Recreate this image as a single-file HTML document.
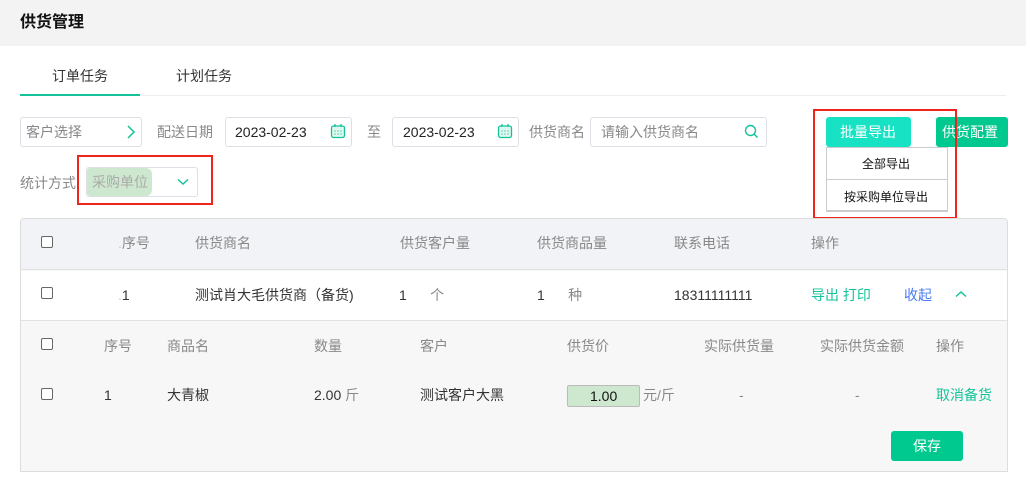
<!DOCTYPE html>
<html><head><meta charset="utf-8"><style>
*{margin:0;padding:0;box-sizing:border-box}
body{width:1026px;height:484px;position:relative;background:#fff;font-family:"Liberation Sans","Noto Sans CJK SC",sans-serif;font-size:14px;color:#333;overflow:hidden}
.a{position:absolute;white-space:nowrap}
.t{position:absolute;white-space:nowrap;line-height:16px}
.box{position:absolute;border:1px solid #dcdfe6;border-radius:3px;background:#fff}
.cb{position:absolute;width:12px;height:12px;border:1px solid #666;border-radius:2px;background:#fff}
.g{color:#888}
</style></head><body>
<div class="a" style="left:0;top:0;width:1026px;height:46px;background:#f3f3f3"></div>
<div class="t" style="left:20px;top:14px;font-size:16px;font-weight:bold;line-height:18px;color:#111">供货管理</div>
<div class="t" style="left:52px;top:68px;font-size:14px;color:#333">订单任务</div>
<div class="t" style="left:176px;top:68px;font-size:14px;color:#333">计划任务</div>
<div class="a" style="left:20px;top:95px;width:986px;height:1px;background:#eee"></div>
<div class="a" style="left:20px;top:94px;width:120px;height:2px;background:#14c39a"></div>

<div class="box" style="left:20px;top:117px;width:122px;height:30px"></div>
<div class="t g" style="left:26px;top:124px">客户选择</div>
<svg class="a" style="left:126px;top:125px" width="10" height="14"><path d="M2 1l6 6-6 6" stroke="#14c39a" stroke-width="1.5" fill="none"/></svg>
<div class="t g" style="left:157px;top:124px">配送日期</div>
<div class="box" style="left:225px;top:117px;width:127px;height:30px"></div>
<div class="t" style="left:235px;top:124px;color:#222">2023-02-23</div>
<div class="t g" style="left:367px;top:124px">至</div>
<div class="box" style="left:392px;top:117px;width:127px;height:30px"></div>
<div class="t" style="left:403px;top:124px;color:#222">2023-02-23</div>
<svg class="a" style="left:330px;top:123px" width="16" height="16"><rect x="1.5" y="3" width="13" height="11.5" rx="2" stroke="#14c39a" fill="#dff7ef" stroke-width="1.3"/><path d="M5 1v3M11 1v3M4.5 8h1M7.5 8h1M10.5 8h1M4.5 11h1M7.5 11h1M10.5 11h1" stroke="#14c39a" stroke-width="1.3"/></svg>
<svg class="a" style="left:497px;top:123px" width="16" height="16"><rect x="1.5" y="3" width="13" height="11.5" rx="2" stroke="#14c39a" fill="#dff7ef" stroke-width="1.3"/><path d="M5 1v3M11 1v3M4.5 8h1M7.5 8h1M10.5 8h1M4.5 11h1M7.5 11h1M10.5 11h1" stroke="#14c39a" stroke-width="1.3"/></svg>
<div class="t g" style="left:529px;top:124px">供货商名</div>
<div class="box" style="left:590px;top:117px;width:177px;height:30px"></div>
<div class="t g" style="left:601px;top:124px">请输入供货商名</div>
<svg class="a" style="left:744px;top:124px" width="15" height="15"><circle cx="6.5" cy="6.5" r="5" stroke="#14c39a" stroke-width="1.4" fill="none"/><path d="M10 10l3.5 3.5" stroke="#14c39a" stroke-width="1.5"/></svg>

<div class="a" style="left:826px;top:117px;width:85px;height:30px;background:#17e3c4;border-radius:3px"></div>
<div class="t" style="left:840px;top:124px;color:#fff;font-size:14px">批量导出</div>
<div class="a" style="left:936px;top:117px;width:72px;height:30px;background:#00c98f;border-radius:3px"></div>
<div class="t" style="left:942px;top:124px;color:#fff;font-size:14px">供货配置</div>
<div class="a" style="left:826px;top:147px;width:122px;height:65px;border:1px solid #ccc;border-bottom:2px solid #ccc;background:#fff"></div>
<div class="a" style="left:826px;top:179px;width:122px;height:1px;background:#ccc"></div>
<div class="t" style="left:862px;top:156px;font-size:12px;color:#111">全部导出</div>
<div class="t" style="left:844px;top:189px;font-size:12px;color:#111">按采购单位导出</div>
<div class="a" style="left:813px;top:109px;width:144px;height:110px;border:2px solid #f0241c"></div>

<div class="t g" style="left:20px;top:175px">统计方式</div>
<div class="box" style="left:86px;top:167px;width:112px;height:30px"></div>
<div class="a" style="left:87px;top:168px;width:65px;height:28px;background:#cde8cf;border-radius:3px 6px 6px 3px"></div>
<div class="t" style="left:92px;top:174px;color:#aaa;font-size:14px">采购单位</div>
<svg class="a" style="left:177px;top:178px" width="12" height="8"><path d="M1 1.5l5 4.5 5-4.5" stroke="#14c39a" stroke-width="1.5" fill="none"/></svg>
<div class="a" style="left:77px;top:155px;width:136px;height:50px;border:2px solid #f0241c"></div>

<div class="a" style="left:20px;top:218px;width:988px;height:254px;border:1px solid #ddd;border-radius:4px 4px 0 0;background:#f7f7f7;overflow:hidden">
 <div class="a" style="left:0;top:0;width:988px;height:51px;background:#f2f3f7;border-bottom:1px solid #e2e2e2"></div>
 <div class="a" style="left:0;top:52px;width:988px;height:50px;background:#fff;border-bottom:1px solid #e2e2e2"></div>
</div>
<div class="cb" style="left:41px;top:236px"></div>
<div class="t g" style="left:118px;top:235px"><span style="color:#ccc">.</span>序号</div>
<div class="t g" style="left:195px;top:235px">供货商名</div>
<div class="t g" style="left:400px;top:235px">供货客户量</div>
<div class="t g" style="left:537px;top:235px">供货商品量</div>
<div class="t g" style="left:674px;top:235px">联系电话</div>
<div class="t g" style="left:811px;top:235px">操作</div>

<div class="cb" style="left:41px;top:287px"></div>
<div class="t" style="left:118px;top:287px"><span style="color:#ccc">.</span>1</div>
<div class="t" style="left:195px;top:287px">测试肖大毛供货商（备货)</div>
<div class="t" style="left:399px;top:287px">1 &nbsp;&nbsp;&nbsp;&nbsp;&nbsp;<span class="g">个</span></div>
<div class="t" style="left:537px;top:287px">1 &nbsp;&nbsp;&nbsp;&nbsp;&nbsp;<span class="g">种</span></div>
<div class="t" style="left:674px;top:287px">18311111111</div>
<div class="t" style="left:811px;top:287px;color:#14c39a">导出 打印</div>
<div class="t" style="left:904px;top:287px;color:#4a7bf0">收起</div>
<svg class="a" style="left:955px;top:290px" width="12" height="8"><path d="M1 6.5l5-4.5 5 4.5" stroke="#14c39a" stroke-width="1.5" fill="none"/></svg>

<div class="cb" style="left:41px;top:338px"></div>
<div class="t g" style="left:104px;top:338px">序号</div>
<div class="t g" style="left:167px;top:338px">商品名</div>
<div class="t g" style="left:314px;top:338px">数量</div>
<div class="t g" style="left:420px;top:338px">客户</div>
<div class="t g" style="left:567px;top:338px">供货价</div>
<div class="t g" style="left:704px;top:338px">实际供货量</div>
<div class="t g" style="left:820px;top:338px">实际供货金额</div>
<div class="t g" style="left:936px;top:338px">操作</div>

<div class="cb" style="left:41px;top:388px"></div>
<div class="t" style="left:104px;top:387px">1</div>
<div class="t" style="left:167px;top:387px">大青椒</div>
<div class="t" style="left:314px;top:387px">2.00 <span class="g">斤</span></div>
<div class="t" style="left:420px;top:387px">测试客户大黑</div>
<div class="a" style="left:567px;top:385px;width:73px;height:22px;background:#cde8cf;border:1px solid #bbb;border-radius:2px"></div>
<div class="t" style="left:590px;top:388px;color:#111">1.00</div>
<div class="t g" style="left:643px;top:387px">元/斤</div>
<div class="t g" style="left:739px;top:387px">-</div>
<div class="t g" style="left:855px;top:387px">-</div>
<div class="t" style="left:936px;top:387px;color:#14c39a">取消备货</div>
<div class="a" style="left:891px;top:431px;width:72px;height:30px;background:#00c98f;border-radius:3px"></div>
<div class="t" style="left:913px;top:438px;color:#fff">保存</div>
</body></html>
